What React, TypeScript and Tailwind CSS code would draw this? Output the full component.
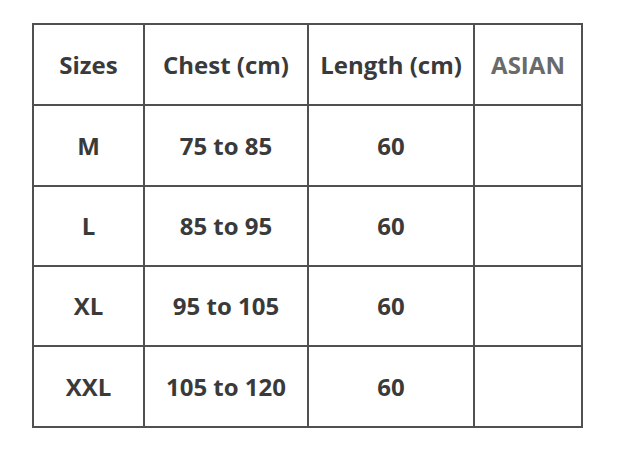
const rows = [
  ["M", "75 to 85", "60"],
  ["L", "85 to 95", "60"],
  ["XL", "95 to 105", "60"],
  ["XXL", "105 to 120", "60"],
];

export default function App() {
  return (
    <main className="w-[626px] h-[452px] bg-white pl-[32px] pt-[23px]" style={{ fontFamily: "'Open Sans', sans-serif" }}>
      <div className="grid w-fit grid-cols-[109px_162px_164px_106px] grid-rows-[79px_79px_78px_78px_79px] gap-[2px] p-[2px] bg-[#505050] text-[24px] font-bold text-[#3a3a3a]">
        <div className="bg-white flex items-center justify-center">Sizes</div>
        <div className="bg-white flex items-center justify-center">Chest (cm)</div>
        <div className="bg-white flex items-center justify-center">Length (cm)</div>
        <div className="bg-white flex items-center justify-center text-[#6a6a6a]">ASIAN</div>
        {rows.map((r) => (
          <>
            <div key={r[0] + "a"} className="bg-white flex items-center justify-center">{r[0]}</div>
            <div key={r[0] + "b"} className="bg-white flex items-center justify-center">{r[1]}</div>
            <div key={r[0] + "c"} className="bg-white flex items-center justify-center">{r[2]}</div>
            <div key={r[0] + "d"} className="bg-white"></div>
          </>
        ))}
      </div>
    </main>
  );
}
